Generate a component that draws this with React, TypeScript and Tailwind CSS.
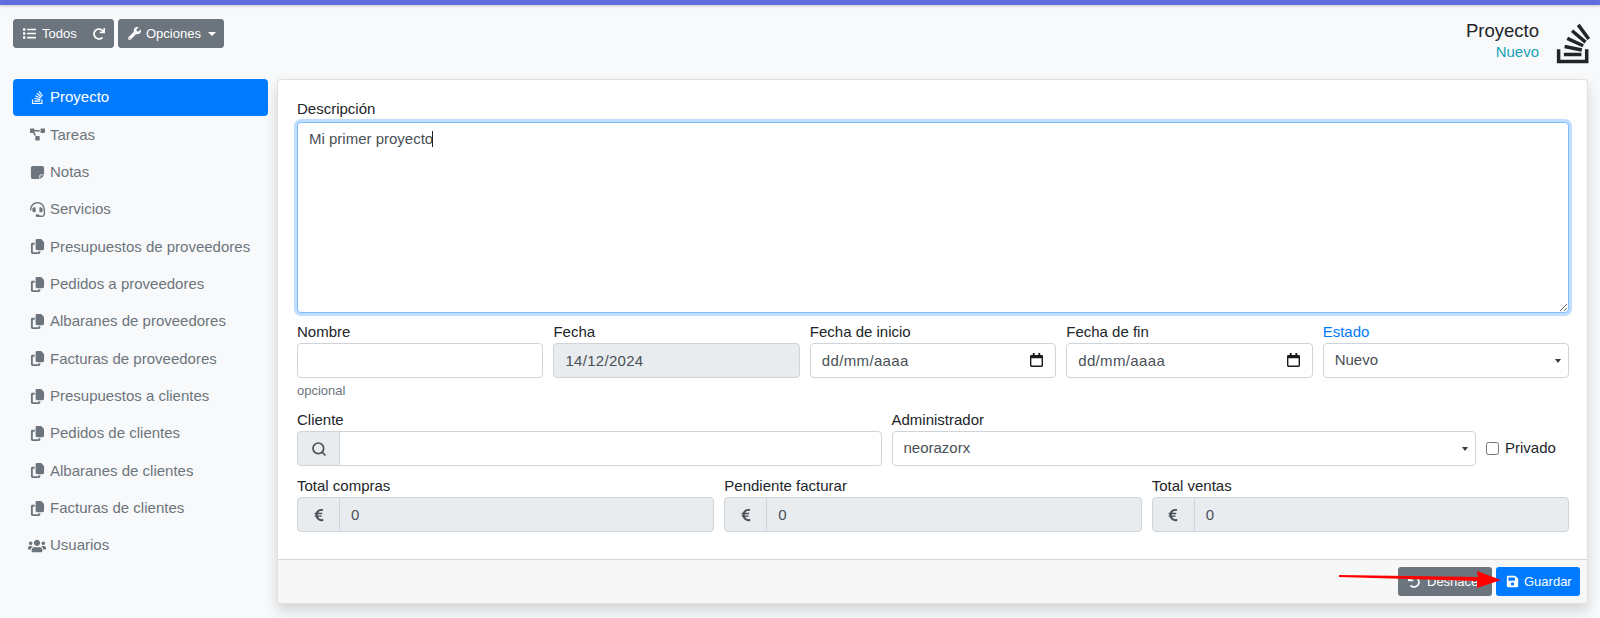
import React from 'react';
import {
  FaList, FaRedo, FaWrench, FaStackOverflow, FaProjectDiagram, FaHeadset,
  FaUsers, FaEuroSign, FaUndo, FaSave,
} from 'react-icons/fa';
import { FaCopy, FaNoteSticky } from 'react-icons/fa6';
import { Search } from 'lucide-react';

const docs = [
  'Presupuestos de proveedores',
  'Pedidos a proveedores',
  'Albaranes de proveedores',
  'Facturas de proveedores',
  'Presupuestos a clientes',
  'Pedidos de clientes',
  'Albaranes de clientes',
  'Facturas de clientes',
];

const inputBase =
  'h-[35px] w-full rounded-[4px] border border-[#ced4da] px-[11px] text-[15px] text-[#495057] outline-none';

function NavItem({ icon, label, active }: { icon: React.ReactNode; label: string; active?: boolean }) {
  return (
    <a
      className={
        active
          ? 'flex h-[37.33px] items-center rounded-[4px] bg-[#007bff] pl-[15px] text-white'
          : 'flex h-[37.33px] items-center rounded-[4px] pl-[15px] text-[#6c757d]'
      }
    >
      <span className="mr-[4px] flex w-[18px] justify-center text-[15px]">{icon}</span>
      {label}
    </a>
  );
}

function Field({ label, blue, children }: { label: string; blue?: boolean; children: React.ReactNode }) {
  return (
    <div className="min-w-0 flex-1">
      <label className={blue ? 'block h-[21px] leading-[21px] text-[#007bff]' : 'block h-[21px] leading-[21px] text-[#212529]'}>
        {label}
      </label>
      <div className="mt-[1px]">{children}</div>
    </div>
  );
}

function DateField({ label }: { label: string }) {
  return (
    <Field label={label}>
      <div className="relative">
        <input readOnly value="dd/mm/aaaa" className={`${inputBase} bg-white tracking-[0.35px]`} />
        <svg className="absolute right-[13px] top-[10px]" width="13" height="14" viewBox="0 0 14 15">
          <path d="M3 0h2v2h4V0h2v2h1.5A1.5 1.5 0 0 1 14 3.5v10a1.5 1.5 0 0 1-1.5 1.5h-11A1.5 1.5 0 0 1 0 13.5v-10A1.5 1.5 0 0 1 1.5 2H3V0zm-1.5 5.5v8h11v-8h-11z" fill="#1a1a1a" />
        </svg>
      </div>
    </Field>
  );
}

function SelectField({ label, value, blue }: { label: string; value: string; blue?: boolean }) {
  return (
    <Field label={label} blue={blue}>
      <div className="relative">
        <select defaultValue={value} className={`${inputBase} appearance-none bg-white`}>
          <option>{value}</option>
        </select>
        <span className="absolute right-[8px] top-[16px] h-0 w-0 border-x-[3.5px] border-t-[4px] border-x-transparent border-t-[#343a40]" />
      </div>
    </Field>
  );
}

function Prepend({ children }: { children: React.ReactNode }) {
  return (
    <span className="flex h-[35px] w-[43px] shrink-0 items-center justify-center rounded-l-[4px] border border-[#ced4da] bg-[#e9ecef] text-[#495057]">
      {children}
    </span>
  );
}

function TotalField({ label }: { label: string }) {
  return (
    <Field label={label}>
      <div className="flex">
        <Prepend><FaEuroSign className="text-[14px]" /></Prepend>
        <input
          disabled
          value="0"
          className="-ml-px h-[35px] w-full rounded-r-[4px] border border-[#ced4da] bg-[#e9ecef] px-[11px] text-[15px] text-[#495057] outline-none"
        />
      </div>
    </Field>
  );
}

export default function App() {
  return (
    <div className="relative h-[618px] overflow-hidden bg-[#f8f9fa] font-['Liberation_Sans',Arial,sans-serif] text-[15px] text-[#212529]">
      <div className="h-[5px] bg-[#5f6ede] shadow-[0_1px_3px_rgba(0,0,0,0.2)]" />

      <div className="flex h-[74px] items-start justify-between pl-[13px] pr-[4px]">
        <div className="mt-[14px] flex gap-[4px] text-[13px] text-white">
          <div className="flex h-[29px] w-[101px] items-center rounded-[3px] border border-[#6c757d] bg-[#6c757d] pl-[9px]">
            <FaList className="mr-[6px] text-[13px]" />
            <span>Todos</span>
            <FaRedo className="ml-[16px] text-[12px]" />
          </div>
          <div className="flex h-[29px] w-[106px] items-center rounded-[3px] border border-[#6c757d] bg-[#6c757d] pl-[9px]">
            <FaWrench className="mr-[5px] text-[13px]" />
            <span>Opciones</span>
            <span className="ml-[7px] h-0 w-0 border-x-[4px] border-t-[4px] border-x-transparent border-t-white" />
          </div>
        </div>
        <div className="mt-[15px] flex">
          <div className="text-right">
            <div className="text-[18.5px] leading-[21px]">Proyecto</div>
            <div className="text-[15px] leading-[21px] text-[#17a2b8]">Nuevo</div>
          </div>
          <FaStackOverflow className="ml-[12px] mt-[1px] text-[45px]" />
        </div>
      </div>

      <div className="flex items-start gap-[10px] pl-[13px] pr-[12px]">
        <nav className="w-[255px] shrink-0">
          <NavItem active icon={<FaStackOverflow />} label="Proyecto" />
          <NavItem icon={<FaProjectDiagram />} label="Tareas" />
          <NavItem icon={<FaNoteSticky />} label="Notas" />
          <NavItem icon={<FaHeadset />} label="Servicios" />
          {docs.map((d) => (
            <NavItem key={d} icon={<FaCopy />} label={d} />
          ))}
          <NavItem icon={<FaUsers className="text-[18px]" />} label="Usuarios" />
        </nav>

        <div className="-ml-px h-[525px] min-w-0 flex-1 overflow-hidden rounded-[4px] border border-[rgba(0,0,0,0.125)] bg-white shadow-[0_7px_14px_rgba(0,0,0,0.15)]">
          <div className="h-[479px] pl-[19px] pr-[18px] pt-[18px]">
            <label className="block h-[21px] leading-[21px]">Descripción</label>
            <div className="relative mt-[3px] h-[191px]">
              <textarea
                readOnly
                value="Mi primer proyecto"
                className="block h-full w-full rounded-[4px] border border-[#80bdff] bg-white px-[11px] py-[5px] text-[15px] leading-[21px] text-[#495057] shadow-[0_0_0_3px_rgba(0,123,255,0.25)] outline-none"
              />
              <span className="absolute left-[135px] top-[9px] h-[16px] w-px bg-[#212529]" />
            </div>

            <div className="mt-[8px] flex gap-[10px]">
              <Field label="Nombre">
                <input readOnly className={`${inputBase} bg-white`} />
              </Field>
              <Field label="Fecha">
                <input disabled value="14/12/2024" className={`${inputBase} bg-[#e9ecef] tracking-[0.3px]`} />
              </Field>
              <DateField label="Fecha de inicio" />
              <DateField label="Fecha de fin" />
              <SelectField label="Estado" value="Nuevo" blue />
            </div>
            <div className="mt-[4px] h-[18px] text-[13px] leading-[18px] text-[#6c757d]">opcional</div>

            <div className="mt-[9px] flex gap-[10px]">
              <Field label="Cliente">
                <div className="flex">
                  <Prepend><Search size={16} strokeWidth={2.5} /></Prepend>
                  <input readOnly className="-ml-px h-[35px] w-full rounded-r-[4px] border border-[#ced4da] bg-white px-[11px] outline-none" />
                </div>
              </Field>
              <SelectField label="Administrador" value="neorazorx" />
              <div className="flex w-[83px] shrink-0 items-center pt-[21px]">
                <span className="h-[13px] w-[13px] rounded-[2.5px] border border-[#767676] bg-white" />
                <span className="ml-[6px]">Privado</span>
              </div>
            </div>

            <div className="mt-[9px] flex gap-[10px]">
              <TotalField label="Total compras" />
              <TotalField label="Pendiente facturar" />
              <TotalField label="Total ventas" />
            </div>
          </div>

          <div className="flex h-[46px] items-start justify-end gap-[4px] border-t border-[rgba(0,0,0,0.125)] bg-[#f7f7f7] pr-[7px] pt-[7px] text-[13px] text-white">
            <div className="flex h-[29px] w-[94px] items-center rounded-[3px] bg-[#6c757d] pl-[10px]">
              <FaUndo className="mr-[7px] text-[12px]" />
              Deshacer
            </div>
            <div className="flex h-[29px] w-[84px] items-center rounded-[3px] bg-[#007bff] pl-[10px]">
              <FaSave className="mr-[5px] text-[13px]" />
              Guardar
            </div>
          </div>
        </div>
      </div>

      <svg className="pointer-events-none absolute left-0 top-0" width="1600" height="618">
        <polygon points="1339,575 1478,577 1477,571 1501,580 1477,588 1477,581 1339,577" fill="#ff0000" />
      </svg>
    </div>
  );
}
